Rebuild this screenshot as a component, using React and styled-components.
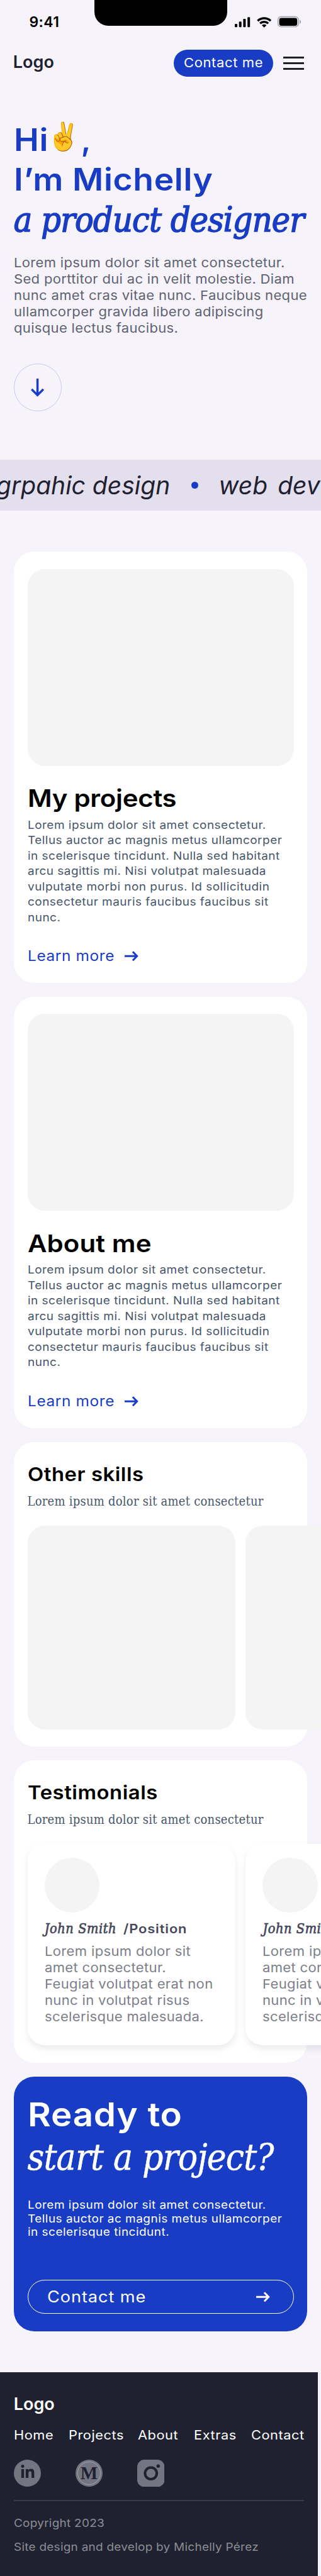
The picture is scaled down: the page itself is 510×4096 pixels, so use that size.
import React from "react";
import styled, { createGlobalStyle, css } from "styled-components";
import { FaLinkedinIn } from "react-icons/fa";

const SANS = `Inter, "Liberation Sans", sans-serif`;
const SERIF = `"DejaVu Serif Condensed", "DejaVu Serif", serif`;
const BLUE = "#193cc4";
const INK = "#1f2130";

const GlobalStyle = createGlobalStyle`
  *, *::before, *::after { box-sizing: border-box; }
  body { margin: 0; background: #f6f3fb; font-family: ${SANS}; font-kerning: normal; }
  h1, h2, p { margin: 0; font-weight: 400; }
  button { font-family: inherit; border: 0; margin: 0; }
  a { text-decoration: none; color: inherit; }
`;

/* Widens the grotesque letterforms, anchored at the left edge */
const wide = css`
  transform: scaleX(1.08);
  transform-origin: left center;
`;
const Wide = styled.span`
  display: inline-block;
  ${wide}
`;

const Page = styled.div`
  width: 510px;
  height: 4096px;
  overflow: hidden;
  background: #f6f3fb;
`;

/* Status bar */
const StatusBar = styled.div`
  display: grid;
  grid-template-columns: 150.3px 210.4px 149.3px;
  height: 59.8px;
`;
const Clock = styled.div`
  padding: 22.8px 0 0 46.6px;
  font-size: 23px;
  line-height: 24px;
  font-weight: 600;
  letter-spacing: 0.3px;
  color: #000;
`;
const Notch = styled.div`
  height: 40.6px;
  border-radius: 0 0 22px 22px;
  background: #000;
`;

/* Header */
const Header = styled.header`
  display: flex;
  align-items: center;
  height: 43.5px;
  margin: 19px 27.3px 0 20.8px;
`;
const Logo = styled.div`
  font-size: 27px;
  line-height: 32px;
  font-weight: 600;
  letter-spacing: 0px;
  color: ${(p) => (p.$light ? "#fff" : INK)};
`;
const HeaderLogo = styled(Logo)`
  flex: 1;
  padding-bottom: 3px;
`;
const ContactButton = styled.button`
  width: 157.8px;
  height: 43.5px;
  padding: 0 0 1.5px 16px;
  border-radius: 21.76px;
  background: ${BLUE};
  color: #fff;
  font-size: 20.4px;
  letter-spacing: 0.56px;
  text-align: left;
  white-space: nowrap;
`;
const MenuButton = styled.div`
  display: flex;
  flex-direction: column;
  gap: 5.7px;
  margin-left: 16.3px;
`;
const MenuBar = styled.span`
  width: 32.6px;
  height: 3.5px;
  background: #1f1f24;
`;

/* Hero */
const Hero = styled.section`
  padding: 69.2px 0 0 21.76px;
`;
const HeroTitle = styled.h1`
  color: ${BLUE};
  font-size: 49.5px;
  line-height: 62.4px;
  font-weight: 600;
  letter-spacing: 0.55px;
`;
const Greeting = styled.span`
  display: flex;
  height: 62.4px;
`;
const Emoji = styled.span`
  width: 56px;
  padding-bottom: 10px;
  display: flex;
  align-items: center;
  justify-content: center;
  font-family: "Noto Color Emoji", sans-serif;
  font-size: 43px;
  line-height: 1;
  font-weight: 400;
  letter-spacing: 0;
`;
const Role = styled.em`
  display: block;
  margin-top: 2px;
  font-family: ${SERIF};
  font-size: 55px;
  font-weight: 400;
  font-style: italic;
  letter-spacing: -0.8px;
  white-space: nowrap;
  -webkit-text-stroke: 1.5px ${BLUE};
`;
const HeroText = styled.p`
  ${wide}
  margin-top: 24.8px;
  font-size: 20.4px;
  line-height: 25.8px;
  letter-spacing: 0.3px;
  color: #5e6270;
  white-space: pre;
`;
const ScrollButton = styled.div`
  display: flex;
  align-items: center;
  justify-content: center;
  width: 76px;
  height: 76px;
  margin-top: 43.9px;
  border: 1.36px solid #c5cef0;
  border-radius: 50%;
`;

/* Ticker */
const Ticker = styled.div`
  display: flex;
  align-items: center;
  height: 81.7px;
  margin-top: 76.3px;
  overflow: hidden;
  background: #e3dfec;
  color: ${INK};
  font-size: 39px;
  font-style: italic;
  white-space: nowrap;
`;
const TickerItem = styled.span`
  margin-left: ${(p) => p.$lead}px;
  word-spacing: ${(p) => p.$space || 0}px;
`;
const Dot = styled.span`
  flex: none;
  width: 10.9px;
  height: 10.9px;
  margin: 0 32.5px 0 34px;
  border-radius: 50%;
  background: ${BLUE};
`;

/* Cards */
const Stack = styled.main`
  display: flex;
  flex-direction: column;
  gap: 22.2px;
  padding: 65px 21.76px 0;
`;
const Card = styled.section`
  height: ${(p) => p.$height}px;
  padding: ${(p) => p.$top}px 21.76px 0;
  border-radius: 32.6px;
  background: ${(p) => (p.$accent ? BLUE : "#fff")};
`;
const CardImage = styled.div`
  height: 313px;
  border-radius: 27.2px;
  background: #f4f4f4;
`;
const CardTitle = styled.h2`
  ${wide}
  margin-top: 29.7px;
  font-size: 38.8px;
  line-height: 44px;
  font-weight: 600;
  letter-spacing: ${(p) => p.$tracking}px;
  color: #000;
`;
const Copy = styled.p`
  ${wide}
  margin-top: 8.3px;
  font-size: 17.6px;
  line-height: 24.5px;
  letter-spacing: 0.43px;
  color: #475569;
  white-space: pre;
`;
const LearnMore = styled.a`
  display: flex;
  align-items: center;
  gap: 26.5px;
  margin-top: 35px;
  font-size: 22.6px;
  line-height: 28px;
  letter-spacing: 0.58px;
  color: ${BLUE};
`;

/* Shelves */
const ShelfTitle = styled.h2`
  ${wide}
  font-size: 30.4px;
  line-height: 36px;
  font-weight: 600;
  letter-spacing: 0.5px;
  color: #000;
`;
const ShelfSubtitle = styled.p`
  margin-top: 10.5px;
  font-family: ${SERIF};
  font-size: 20px;
  line-height: 28px;
  letter-spacing: 0.24px;
  color: #475569;
  white-space: nowrap;
`;
const Shelf = styled.div`
  display: flex;
  gap: 16.3px;
  width: max-content;
  margin-top: 25.3px;
`;
const SkillTile = styled.div`
  width: 330.4px;
  height: 323.9px;
  border-radius: 27.2px;
  background: #f4f4f4;
`;
const Testimonial = styled.article`
  width: 330.4px;
  height: 319.6px;
  padding: 22.1px 0 0 27.2px;
  border-radius: 27.2px;
  background: #fff;
  box-shadow: 0 5.4px 10.9px rgba(0, 0, 0, 0.08);
`;
const Avatar = styled.div`
  width: 87.2px;
  height: 87.2px;
  border-radius: 50%;
  background: #f4f4f4;
`;
const Author = styled.div`
  display: flex;
  gap: 11px;
  margin-top: 12.5px;
  line-height: 26px;
  color: #46485a;
  white-space: nowrap;
`;
const AuthorName = styled.em`
  font-family: ${SERIF};
  font-size: 21.5px;
  letter-spacing: 0.6px;
  -webkit-text-stroke: 0.7px #46485a;
`;
const AuthorRole = styled.span`
  ${wide}
  font-size: 20.3px;
  font-weight: 600;
  letter-spacing: 0.8px;
`;
const Quote = styled.p`
  ${wide}
  margin-top: 10.1px;
  font-size: 20.4px;
  line-height: 25.9px;
  letter-spacing: 0.32px;
  color: #7c7e89;
  white-space: pre;
`;

/* Call to action */
const CtaTitle = styled.h2`
  color: #fff;
  font-size: 52.3px;
  line-height: 64px;
  font-weight: 600;
  letter-spacing: 0.73px;
`;
const CtaAccent = styled.em`
  display: block;
  margin-top: 4px;
  font-family: ${SERIF};
  font-size: 58px;
  font-weight: 400;
  letter-spacing: -0.8px;
  white-space: nowrap;
  -webkit-text-stroke: 0.5px #fff;
`;
const CtaCopy = styled(Copy)`
  margin-top: 32.2px;
  line-height: 21.9px;
  color: #fff;
`;
const CtaButton = styled.button`
  display: flex;
  align-items: center;
  justify-content: space-between;
  width: 100%;
  height: 54.3px;
  margin-top: 64.4px;
  padding: 0 36.6px 0 30.8px;
  border: 1.4px solid #fff;
  border-radius: 27.2px;
  background: transparent;
  color: #fff;
  font-size: 25.2px;
  letter-spacing: 0.83px;
`;

/* Footer */
const Footer = styled.footer`
  width: 504.5px;
  height: 327px;
  margin-top: 65.5px;
  padding: 35.3px 21.76px 0 21.76px;
  background: ${INK};
`;
const FooterNav = styled.nav`
  display: flex;
  justify-content: space-between;
  margin: 19.8px 5px 0 0;
  color: #fff;
  font-size: 20.2px;
  line-height: 26px;
  letter-spacing: 0.5px;
`;
const NavLink = styled.a`
  ${wide}
`;
const Socials = styled.div`
  display: flex;
  gap: 54.4px;
  margin-top: 25.5px;
`;
const SocialBadge = styled.a`
  display: flex;
  align-items: center;
  justify-content: center;
  width: 43.5px;
  height: 43.5px;
  border-radius: 50%;
  background: #737681;
  color: ${INK};
  font-size: 23.9px;
  padding-bottom: 2.6px;
`;
const MediumBadge = styled(SocialBadge)`
  padding: 3.4px;
`;
const MediumRing = styled.span`
  display: flex;
  align-items: center;
  justify-content: center;
  width: 100%;
  height: 100%;
  border: 1px solid #a3a5ac;
  border-radius: 50%;
  font: 700 29px/1 "Liberation Serif", serif;
`;
const Rule = styled.div`
  height: 1.4px;
  margin-top: 21.1px;
  background: #373a4b;
`;
const Legal = styled.p`
  ${wide}
  margin-top: ${(p) => p.$gap}px;
  font-size: 17.6px;
  line-height: 24px;
  letter-spacing: 0.22px;
  color: #8b8d95;
`;

const StatusIcons = () => (
  <svg width="149.3" height="59.8" viewBox="0 0 149.3 59.8">
    <rect x="12" y="38" width="4" height="5.3" rx="1.2" />
    <rect x="18.7" y="34.3" width="4" height="9" rx="1.2" />
    <rect x="25.4" y="30" width="4" height="13.3" rx="1.2" />
    <rect x="32.2" y="27.2" width="4" height="16.1" rx="1.2" />
    <g fill="none" stroke="#000" strokeWidth="3.4">
      <path d="M48.4 33.2a14.8 14.8 0 0 1 20.6 0" />
      <path d="M52.2 37.3a9.4 9.4 0 0 1 13 0" />
    </g>
    <path d="M55 40.2a5.4 5.4 0 0 1 7.4 0l-3.7 3.6z" />
    <rect x="80.6" y="26.5" width="32.6" height="16" rx="5" fill="none" stroke="#a5a3a9" strokeWidth="1.4" />
    <rect x="82.6" y="28.6" width="28.6" height="12.3" rx="3.4" />
    <path d="M115 31.6c2.8 1.2 2.8 5.2 0 6.4z" fill="#a5a3a9" />
  </svg>
);

const ArrowRight = () => (
  <svg width="21.8" height="16.4" viewBox="0 0 21.8 16.4" fill="none" stroke="currentColor" strokeWidth="3">
    <path d="M0 8.2H19.5M12.9 1.2L19.7 8.2L12.9 15.2" />
  </svg>
);

const ArrowDown = () => (
  <svg width="21.2" height="30.8" viewBox="0 -1 21.2 30.8" fill="none" stroke={BLUE} strokeWidth="3.5">
    <path d="M10.6 0V26M1.3 17L10.6 26.3L19.9 17" />
  </svg>
);

const Instagram = () => (
  <svg width="43.5" height="43.5" viewBox="0 0 64 64">
    <rect width="64" height="64" rx="17" fill="#737681" />
    <circle cx="32" cy="32" r="13.7" fill="none" stroke={INK} strokeWidth="6" />
    <circle cx="49" cy="15" r="4" fill={INK} />
  </svg>
);

const PROJECT_COPY = `Lorem ipsum dolor sit amet consectetur.
Tellus auctor ac magnis metus ullamcorper
in scelerisque tincidunt. Nulla sed habitant
arcu sagittis mi. Nisi volutpat malesuada
vulputate morbi non purus. Id sollicitudin
consectetur mauris faucibus faucibus sit
nunc.`;

const FeatureCard = ({ title, tracking }) => (
  <Card $height={685.6} $top={27.2}>
    <CardImage />
    <CardTitle $tracking={tracking}>{title}</CardTitle>
    <Copy>{PROJECT_COPY}</Copy>
    <LearnMore href="#">
      <Wide>Learn more</Wide>
      <ArrowRight />
    </LearnMore>
  </Card>
);

const TestimonialCard = () => (
  <Testimonial>
    <Avatar />
    <Author>
      <AuthorName>John Smith</AuthorName>
      <AuthorRole>/Position</AuthorRole>
    </Author>
    <Quote>{`Lorem ipsum dolor sit
amet consectetur.
Feugiat volutpat erat non
nunc in volutpat risus
scelerisque malesuada.`}</Quote>
  </Testimonial>
);

export default function App() {
  return (
    <Page>
      <GlobalStyle />
      <StatusBar>
        <Clock>9:41</Clock>
        <Notch />
        <StatusIcons />
      </StatusBar>

      <Header>
        <HeaderLogo>Logo</HeaderLogo>
        <ContactButton>
          <Wide>Contact me</Wide>
        </ContactButton>
        <MenuButton>
          <MenuBar />
          <MenuBar />
          <MenuBar />
        </MenuButton>
      </Header>

      <Hero>
        <HeroTitle>
          <Greeting>
            <Wide>Hi</Wide>
            <Emoji>✌️</Emoji>,
          </Greeting>
          <Wide>I’m Michelly</Wide>
          <Role>a product designer</Role>
        </HeroTitle>
        <HeroText>{`Lorem ipsum dolor sit amet consectetur.
Sed porttitor dui ac in velit molestie. Diam
nunc amet cras vitae nunc. Faucibus neque
ullamcorper gravida libero adipiscing
quisque lectus faucibus.`}</HeroText>
        <ScrollButton>
          <ArrowDown />
        </ScrollButton>
      </Hero>

      <Ticker>
        <TickerItem $lead={-6}>grpahic design</TickerItem>
        <Dot />
        <TickerItem $lead={0} $space={5}>web dev</TickerItem>
      </Ticker>

      <Stack>
        <FeatureCard title="My projects" tracking={-0.24} />
        <FeatureCard title="About me" tracking={0.1} />

        <Card $height={484.4} $top={33.3}>
          <ShelfTitle>Other skills</ShelfTitle>
          <ShelfSubtitle>Lorem ipsum dolor sit amet consectetur</ShelfSubtitle>
          <Shelf>
            <SkillTile />
            <SkillTile />
          </Shelf>
        </Card>

        <Card $height={480.1} $top={32.8}>
          <ShelfTitle>Testimonials</ShelfTitle>
          <ShelfSubtitle>Lorem ipsum dolor sit amet consectetur</ShelfSubtitle>
          <Shelf>
            <TestimonialCard />
            <TestimonialCard />
          </Shelf>
        </Card>

        <Card $height={404.8} $top={28.7} $accent>
          <CtaTitle>
            <Wide>Ready to</Wide>
            <CtaAccent>start a project?</CtaAccent>
          </CtaTitle>
          <CtaCopy>{`Lorem ipsum dolor sit amet consectetur.
Tellus auctor ac magnis metus ullamcorper
in scelerisque tincidunt.`}</CtaCopy>
          <CtaButton>
            <Wide>Contact me</Wide>
            <ArrowRight />
          </CtaButton>
        </Card>
      </Stack>

      <Footer>
        <Logo $light>Logo</Logo>
        <FooterNav>
          <NavLink href="#">Home</NavLink>
          <NavLink href="#">Projects</NavLink>
          <NavLink href="#">About</NavLink>
          <NavLink href="#">Extras</NavLink>
          <NavLink href="#">Contact</NavLink>
        </FooterNav>
        <Socials>
          <SocialBadge href="#">
            <FaLinkedinIn />
          </SocialBadge>
          <MediumBadge href="#">
            <MediumRing>M</MediumRing>
          </MediumBadge>
          <Instagram />
        </Socials>
        <Rule />
        <Legal $gap={23.1}>Copyright 2023</Legal>
        <Legal $gap={13.9}>Site design and develop by Michelly Pérez</Legal>
      </Footer>
    </Page>
  );
}
